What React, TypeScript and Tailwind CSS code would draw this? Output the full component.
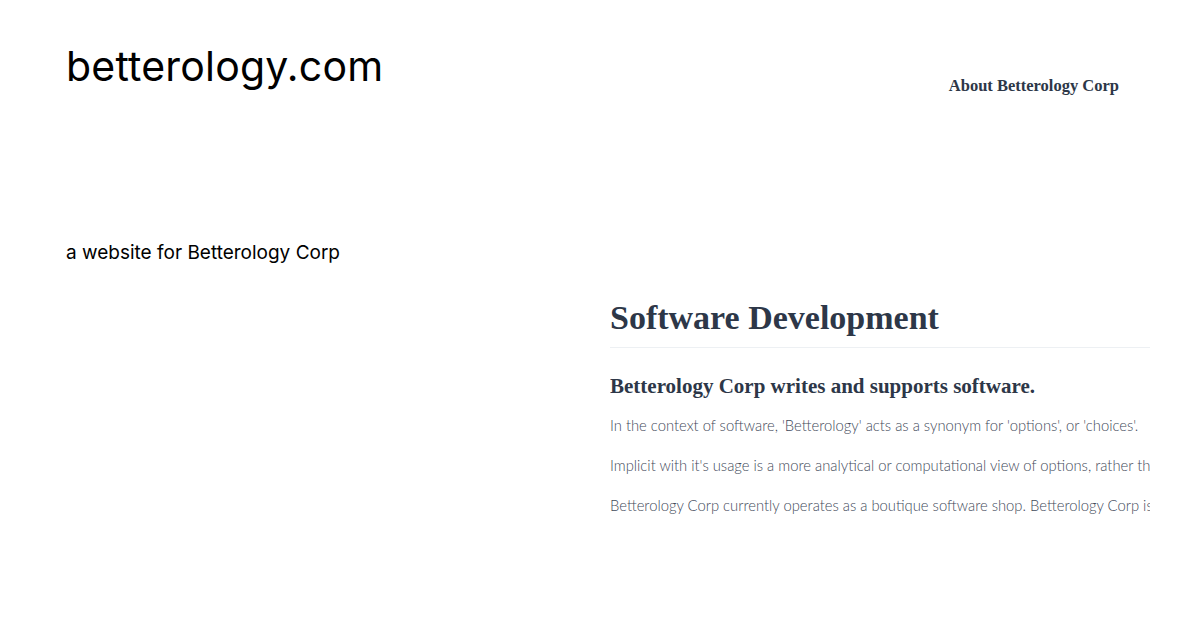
import React from 'react';

const serif = { fontFamily: '"Liberation Serif", "DejaVu Serif", serif' };

export default function App() {
  return (
    <div className="w-[1200px] h-[633px] bg-white overflow-hidden" style={{ fontFamily: 'Inter, "Noto Sans", sans-serif' }}>
      <header className="flex justify-between pl-[66px] pr-[81px] pt-[40px]">
        <h1 className="text-[41px] leading-[52px] text-black tracking-[0.2px]">betterology.com</h1>
        <nav className="pt-[33px]">
          <a className="text-[16.5px] font-bold text-[#2d3748]" style={serif}>About Betterology Corp</a>
        </nav>
      </header>

      <p className="pl-[66px] mt-[142px] text-[19px] leading-[24px] text-black">a website for Betterology Corp</p>

      <main className="flex mt-[31px]">
        <div className="w-[610px] shrink-0" />
        <section className="w-[540px] overflow-hidden whitespace-nowrap">
          <h2 className="text-[34px] leading-[44px] font-bold text-[#2d3748]" style={serif}>Software Development</h2>
          <hr className="mt-[7px] border-0 h-px bg-[#edf0f3]" />
          <h3 className="mt-[25px] text-[21px] leading-[26px] font-bold text-[#2d3748]" style={serif}>Betterology Corp writes and supports software.</h3>
          <div className="mt-[16px] flex flex-col gap-[19px] text-[14.8px] leading-[21px] font-light text-[#3f4a5a]" style={{ fontFamily: 'Lato, "Open Sans", sans-serif' }}>
            <p>In the context of software, 'Betterology' acts as a synonym for 'options', or 'choices'.</p>
            <p>Implicit with it's usage is a more analytical or computational view of options, rather than an emotional one.</p>
            <p>Betterology Corp currently operates as a boutique software shop. Betterology Corp is based in the United States.</p>
          </div>
        </section>
      </main>
    </div>
  );
}
